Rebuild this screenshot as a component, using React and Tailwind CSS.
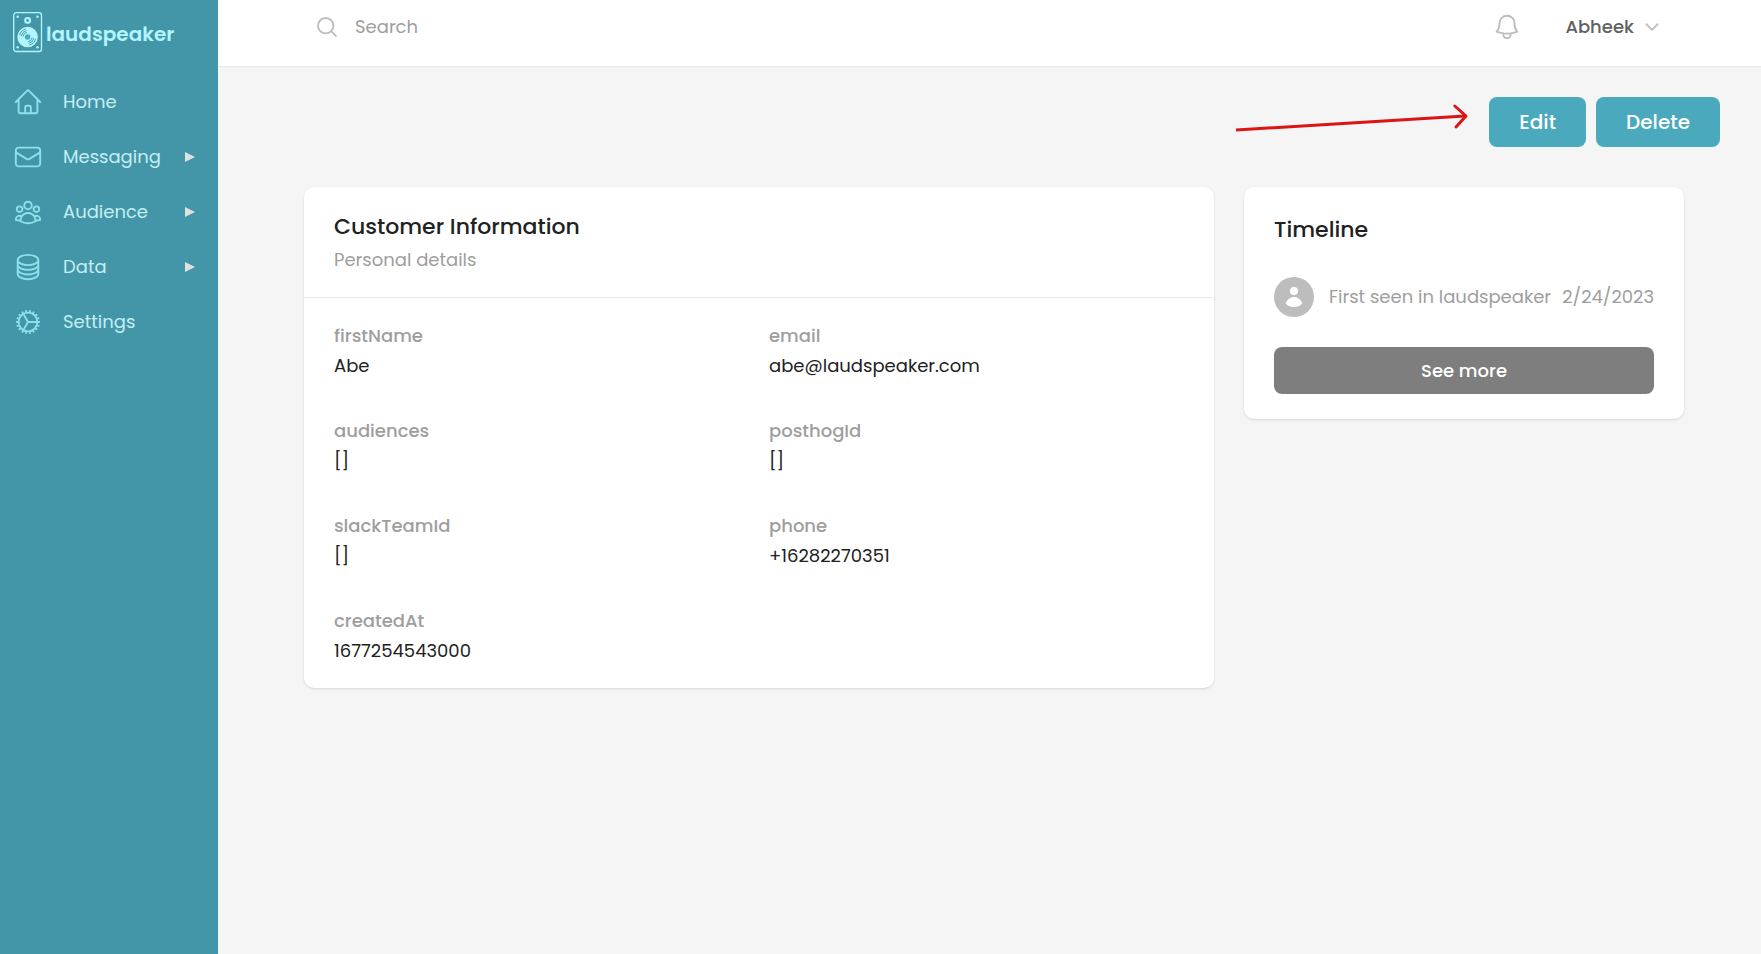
import {
  HiOutlineBell,
  HiOutlineChevronDown,
  HiOutlineCircleStack,
  HiOutlineCog,
  HiOutlineEnvelope,
  HiOutlineHome,
  HiOutlineUserGroup,
} from "react-icons/hi2";

const navItems = [
  { label: "Home", Icon: HiOutlineHome },
  { label: "Messaging", Icon: HiOutlineEnvelope, nested: true },
  { label: "Audience", Icon: HiOutlineUserGroup, nested: true },
  { label: "Data", Icon: HiOutlineCircleStack, nested: true },
  { label: "Settings", Icon: HiOutlineCog },
];

const fields = [
  ["firstName", "Abe"],
  ["email", "abe@laudspeaker.com"],
  ["audiences", "[]"],
  ["posthogId", "[]"],
  ["slackTeamId", "[]"],
  ["phone", "+16282270351"],
  ["createdAt", "1677254543000"],
];

function SpeakerLogo() {
  return (
    <svg viewBox="0 0 30 41" className="h-[41px] w-[30px] shrink-0" fill="none" aria-hidden="true">
      <rect x="0.7" y="0.7" width="27.8" height="38.8" rx="2.6" stroke="#b2f5ff" strokeWidth="1.3" />
      <g fill="#b2f5ff">
        <circle cx="4.7" cy="4.7" r="1.2" />
        <circle cx="24.5" cy="4.7" r="1.2" />
        <circle cx="4.7" cy="35.2" r="1.2" />
        <circle cx="24.5" cy="35.2" r="1.2" />
        <circle cx="14.6" cy="25" r="10.3" />
      </g>
      <circle cx="14.6" cy="8.4" r="2.4" stroke="#b2f5ff" strokeWidth="2.1" />
      <circle cx="14.6" cy="25" r="2.7" fill="#4aa9c0" />
      <g stroke="#4296a8" strokeWidth="0.9">
        <path d="M6.600 23.300A8.200 8.200 0 0 1 12.900 17" />
        <path d="M8.300 23.900A6.400 6.400 0 0 1 13.500 18.700" />
        <path d="M10 24.300A4.700 4.700 0 0 1 13.900 20.400" />
        <path d="M22.600 26.700A8.200 8.200 0 0 1 16.300 33" />
        <path d="M20.900 26.100A6.400 6.400 0 0 1 15.700 31.300" />
        <path d="M19.200 25.700A4.700 4.700 0 0 1 15.300 29.600" />
      </g>
    </svg>
  );
}

function Sidebar() {
  return (
    <aside className="w-[218px] shrink-0 bg-[#4396a7]">
      <a href="#" className="flex h-[65px] items-center gap-[3px] pl-[13px] text-[#b2f5ff]">
        <SpeakerLogo />
        <span className="pt-0.5 text-xl font-semibold">laudspeaker</span>
      </a>
      <nav className="mt-3 flex flex-col gap-[5px]">
        {navItems.map(({ label, Icon, nested }) => (
          <a key={label} href="#" className="flex h-[50px] items-center pr-[23px] pl-[13px] text-lg text-[#c3eef5]">
            <Icon className="mr-5 size-[30px] shrink-0 text-[#90dfec]" />
            <span className="grow">{label}</span>
            {nested && (
              <svg viewBox="0 0 10 10" className="size-[10px]" fill="#e0e0e0" aria-hidden="true">
                <path d="M0 0 10 5 0 10Z" />
              </svg>
            )}
          </a>
        ))}
      </nav>
    </aside>
  );
}

function TopBar() {
  return (
    <header className="flex h-[67px] items-center border-b border-[#ececec] bg-white pr-[100px] pb-[13px] pl-[99px]">
      <label className="flex grow items-center gap-[18px]">
        <svg viewBox="0 0 20 20" className="size-5 shrink-0" fill="none" stroke="#bdbdbd" strokeWidth="1.9" aria-hidden="true">
          <circle cx="8.700" cy="8.700" r="7.700" />
          <path d="M14.200 14.200 19.500 19.500" />
        </svg>
        <input
          type="search"
          aria-label="Search"
          placeholder="Search"
          className="w-full bg-transparent text-lg text-[#424242] outline-none placeholder:text-[#9e9e9e]"
        />
      </label>
      <button type="button" aria-label="Notifications" className="mr-[43px]">
        <HiOutlineBell className="size-[30px] text-[#bdbdbd]" />
      </button>
      <button type="button" className="flex items-center gap-[9px] text-lg font-medium text-[#616161]">
        Abheek
        <HiOutlineChevronDown strokeWidth={2.4} className="size-[18px] text-[#bdbdbd]" />
      </button>
    </header>
  );
}

function Actions() {
  return (
    <div className="flex items-center justify-end gap-[10px] pr-[41px]">
      <svg viewBox="0 0 232 30" className="mr-3 h-[30px] w-[232px] overflow-visible" fill="none" stroke="#dc1414" strokeWidth="3" aria-hidden="true">
        <path d="M1 23 230 9" />
        <path d="M219.800 -1 231 9 221 20" strokeLinecap="round" strokeLinejoin="round" />
      </svg>
      <button type="button" className="h-[50px] rounded-lg bg-[#4ba9be] px-[30px] text-xl font-medium text-white">
        Edit
      </button>
      <button type="button" className="h-[50px] rounded-lg bg-[#4ba9be] px-[30px] text-xl font-medium text-white">
        Delete
      </button>
    </div>
  );
}

function CustomerCard() {
  return (
    <section className="rounded-[10px] bg-white shadow-sm lg:col-span-2">
      <div className="border-b border-[#ebebeb] px-[30px] py-[25px]">
        <h2 className="text-[22px] leading-[30px] font-medium text-[#212121]">Customer Information</h2>
        <p className="mt-[5px] text-lg leading-[25px] text-[#9e9e9e]">Personal details</p>
      </div>
      <dl className="grid grid-cols-2 gap-x-5 gap-y-10 px-[30px] py-[25px] text-lg leading-[25px]">
        {fields.map(([name, value]) => (
          <div key={name}>
            <dt className="font-medium text-[#9e9e9e]">{name}</dt>
            <dd className="mt-[5px] text-[#212121]">{value}</dd>
          </div>
        ))}
      </dl>
    </section>
  );
}

function TimelineCard() {
  return (
    <section className="rounded-[10px] bg-white px-[30px] py-[25px] shadow-sm">
      <h2 className="text-[22px] leading-[35px] font-medium text-[#212121]">Timeline</h2>
      <div className="mt-[30px] flex items-center text-lg text-[#9e9e9e]">
        <svg viewBox="0 0 40 40" className="mr-[15px] size-10 shrink-0" aria-hidden="true">
          <circle cx="20" cy="20" r="20" fill="#bdbdbd" />
          <circle cx="20" cy="14" r="4" fill="#fff" />
          <path d="M11.700 26.500C13 22.500 16.500 20 20 20S27 22.500 28.300 26.500C26.500 29 23.400 30 20 30S13.500 29 11.700 26.500Z" fill="#fff" />
        </svg>
        <p className="grow">First seen in laudspeaker</p>
        <time dateTime="2023-02-24">2/24/2023</time>
      </div>
      <button type="button" className="mt-[30px] h-[47px] w-full rounded-lg bg-[#7e7e7e] text-lg font-medium text-white">
        See more
      </button>
    </section>
  );
}

export default function App() {
  return (
    <div className="flex min-h-screen bg-[#f5f5f5] font-['Poppins','Inter',sans-serif]">
      <Sidebar />
      <div className="min-w-0 grow">
        <TopBar />
        <main className="pt-[30px]">
          <Actions />
          <div className="mt-10 grid grid-cols-1 items-start gap-[30px] pr-[77px] pl-[86px] lg:grid-cols-3">
            <CustomerCard />
            <TimelineCard />
          </div>
        </main>
      </div>
    </div>
  );
}
